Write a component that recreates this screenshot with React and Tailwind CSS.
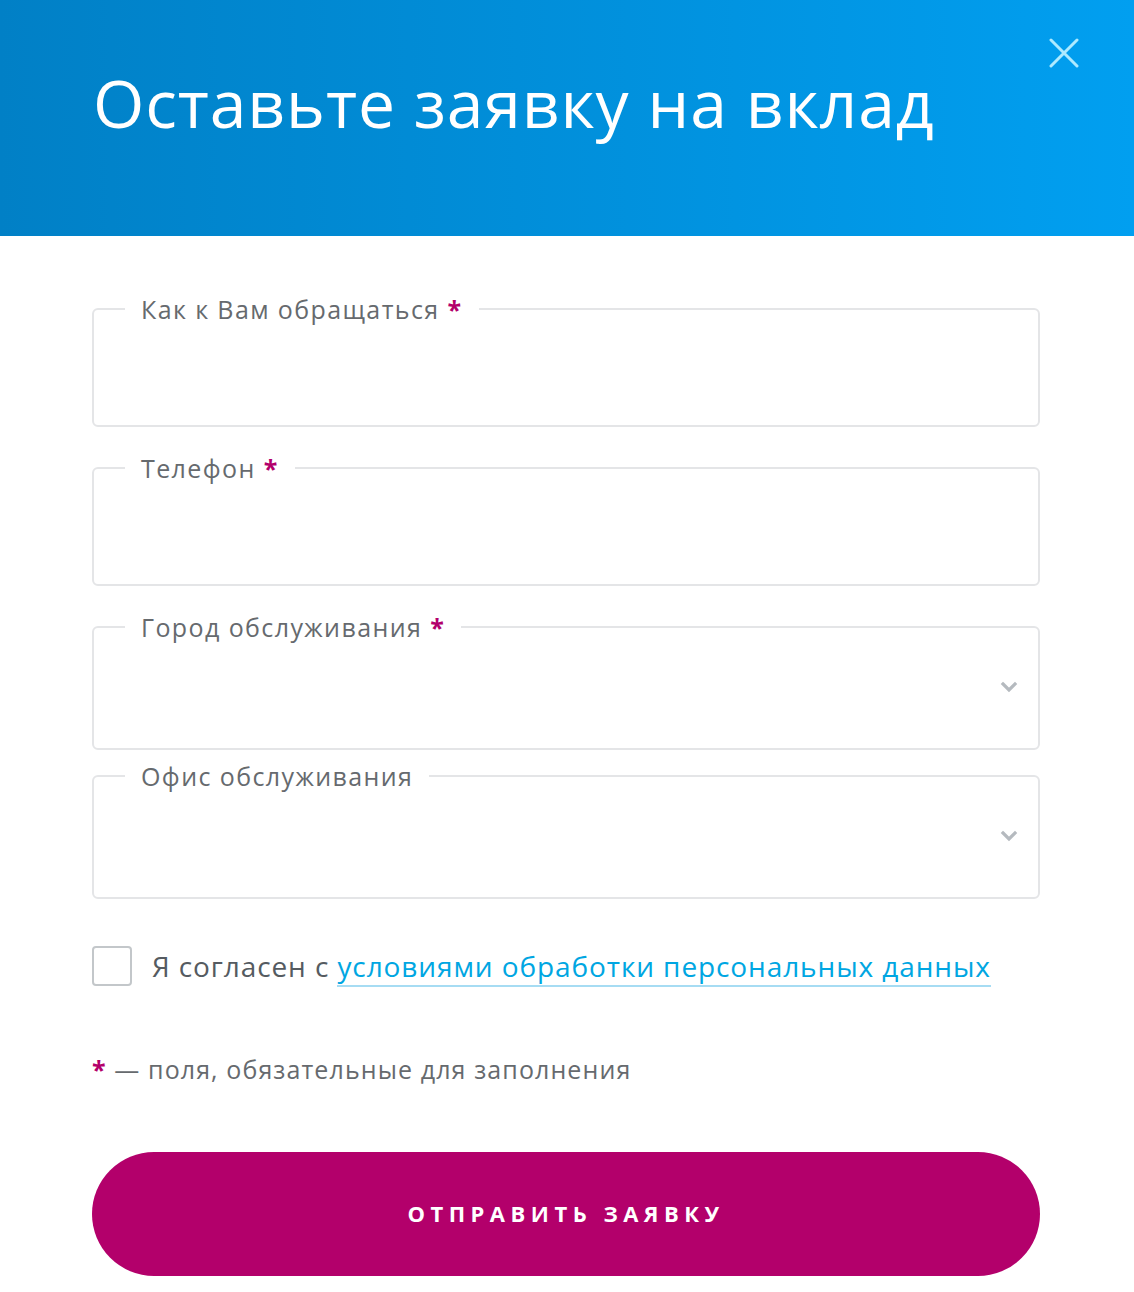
import React from 'react';

const font = { fontFamily: '"Open Sans", "Noto Sans", sans-serif' };

function Chevron() {
  return (
    <svg width="18" height="12" viewBox="0 0 18 12" className="text-[#b5babf]">
      <path d="M3 3l6 6 6-6" fill="none" stroke="currentColor" strokeWidth="3.2" strokeLinecap="square" />
    </svg>
  );
}

function Field({ label, required, select, tall }) {
  return (
    <fieldset className={`border-2 border-[#e4e5e7] rounded-md pl-[31px] pr-6 ${tall ? 'mb-[12px]' : 'mb-[27px]'}`}>
      <legend className="px-[16px] text-[25px] leading-[28px] tracking-[1.4px] text-[#666a6e]">
        {label}
        {required && <span className="text-[#b3006b] ml-2 font-bold">*</span>}
      </legend>
      <div className={`flex items-center justify-end ${tall ? 'h-[107px]' : 'h-[102px]'}`}>
        {select && (
          <div className="mr-[-4px] -mt-[16px]">
            <Chevron />
          </div>
        )}
      </div>
    </fieldset>
  );
}

export default function App() {
  return (
    <div className="w-[1134px] h-[1292px] bg-white" style={font}>
      <header className="relative h-[236px] bg-gradient-to-r from-[#0180c6] to-[#019ff0] px-[93px] pt-[60px]">
        <h1 className="text-[66px] leading-[84px] text-white font-normal tracking-[0.9px]">
          Оставьте заявку на вклад
        </h1>
        <button className="absolute right-[55px] top-[38px] text-[#aeeaff]">
          <svg width="30" height="30" viewBox="0 0 30 30">
            <path d="M2 2l26 26M28 2L2 28" stroke="currentColor" strokeWidth="3" strokeLinecap="round" />
          </svg>
        </button>
      </header>

      <form className="pl-[92px] pr-[94px] pt-[59px]">
        <Field label="Как к Вам обращаться" required />
        <Field label="Телефон" required />
        <Field label="Город обслуживания" required select tall />
        <Field label="Офис обслуживания" select tall />

        <label className="flex items-center mt-[46px] gap-[20px]">
          <span className="w-[40px] h-[40px] rounded-[4px] border-2 border-[#c3c7ca] bg-white shrink-0" />
          <span className="text-[28px] tracking-[0.9px] text-[#555b61]">
            Я согласен с{' '}
            <a className="text-[#00a6e2] border-b-2 border-[#a6dcf3] leading-none">
              условиями обработки персональных данных
            </a>
          </span>
        </label>

        <p className="mt-[64px] text-[25px] tracking-[1.1px] text-[#666a6e]">
          <span className="text-[#b3006b] font-bold">*</span> — поля, обязательные для заполнения
        </p>

        <button
          type="button"
          className="mt-[63px] w-full h-[124px] rounded-full bg-[#b3006b] text-white text-[22px] font-bold tracking-[5.5px]"
        >
          ОТПРАВИТЬ ЗАЯВКУ
        </button>
      </form>
    </div>
  );
}
